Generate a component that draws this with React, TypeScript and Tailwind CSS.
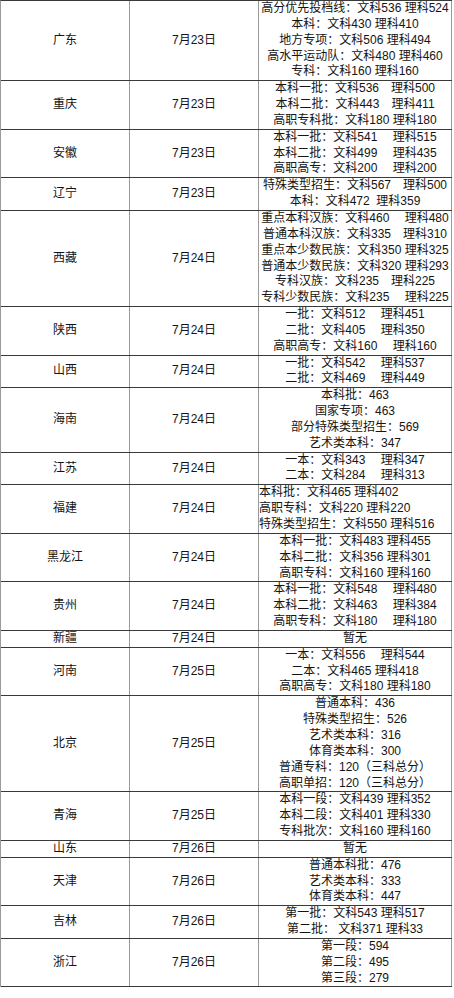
import React from "react";

type Row = { p: string; d: string; lines: string[]; left?: boolean };

const W = "　";

const rows: Row[] = [
  { p: "广东", d: "7月23日", lines: ["高分优先投档线：文科536 理科524", "本科：文科430 理科410", "地方专项：文科506 理科494", "高水平运动队：文科480 理科460", "专科：文科160 理科160"] },
  { p: "重庆", d: "7月23日", lines: [`本科一批：文科536${W}理科500`, `本科二批：文科443${W}理科411`, "高职专科批：文科180 理科180"] },
  { p: "安徽", d: "7月23日", lines: [`本科一批：文科541${W} 理科515`, `本科二批：文科499${W} 理科435`, `高职高专：文科200${W} 理科200`] },
  { p: "辽宁", d: "7月23日", lines: [`特殊类型招生：文科567${W}理科500`, "本科：文科472  理科359"] },
  { p: "西藏", d: "7月24日", lines: [`重点本科汉族：文科460${W} 理科480`, `普通本科汉族：文科335${W}理科310`, "重点本少数民族：文科350 理科325", "普通本少数民族：文科320 理科293", `专科汉族：文科235${W}理科225`, `专科少数民族：文科235${W} 理科225`] },
  { p: "陕西", d: "7月24日", lines: [`一批：文科512${W} 理科451`, `二批：文科405${W} 理科350`, `高职高专：文科160${W} 理科160`] },
  { p: "山西", d: "7月24日", lines: [`一批：文科542${W} 理科537`, `二批：文科469${W} 理科449`] },
  { p: "海南", d: "7月24日", lines: ["本科批：463", "国家专项：463", "部分特殊类型招生：569", "艺术类本科：347"] },
  { p: "江苏", d: "7月24日", lines: [`一本：文科343${W} 理科347`, `二本：文科284${W} 理科313`] },
  { p: "福建", d: "7月24日", left: true, lines: ["本科批：文科465 理科402", "高职专科：文科220 理科220", "特殊类型招生：文科550 理科516"] },
  { p: "黑龙江", d: "7月24日", lines: ["本科一批：文科483 理科455", "本科二批：文科356 理科301", "高职专科：文科160 理科160"] },
  { p: "贵州", d: "7月24日", lines: [`本科一批：文科548${W} 理科480`, `本科二批：文科463${W} 理科384`, `高职专科：文科180${W} 理科180`] },
  { p: "新疆", d: "7月24日", lines: ["暂无"] },
  { p: "河南", d: "7月25日", lines: [`一本：文科556${W} 理科544`, "二本：文科465 理科418", "高职高专：文科180 理科180"] },
  { p: "北京", d: "7月25日", lines: ["普通本科：436", "特殊类型招生：526", "艺术类本科：316", "体育类本科：300", "普通专科：120（三科总分）", "高职单招：120（三科总分）"] },
  { p: "青海", d: "7月25日", lines: ["本科一段：文科439 理科352", "本科二段：文科401 理科330", "专科批次：文科160 理科160"] },
  { p: "山东", d: "7月26日", lines: ["暂无"] },
  { p: "天津", d: "7月26日", lines: ["普通本科批：476", "艺术类本科：333", "体育类本科：447"] },
  { p: "吉林", d: "7月26日", lines: ["第一批：文科543 理科517", "第二批： 文科371 理科33"] },
  { p: "浙江", d: "7月26日", lines: ["第一段：594", "第二段：495", "第三段：279"] },
];

export default function App() {
  return (
    <div
      className="w-[454px] h-[998px] bg-white text-[#141414] text-[12px] leading-[15.85px] overflow-hidden"
      style={{ fontFamily: '"Liberation Sans", "Noto Sans CJK SC", sans-serif' }}
    >
      <div className="w-[452px] border-t border-l border-t-[#3a3a3a] border-l-[#9a9a9a]">
        {rows.map((r, i) => (
          <div key={i} className="grid grid-cols-[129px_129px_1fr] border-b border-[#3a3a3a]">
            <div className="flex items-center justify-center border-r border-[#9a9a9a]">{r.p}</div>
            <div className="flex items-center justify-center border-r border-[#9a9a9a]">{r.d}</div>
            <div className={`flex flex-col justify-center border-r border-[#9a9a9a] ${r.left ? "items-start" : "items-center"}`}>
              {r.lines.map((l, j) => (
                <div key={j} className="whitespace-pre">{l}</div>
              ))}
            </div>
          </div>
        ))}
      </div>
    </div>
  );
}
